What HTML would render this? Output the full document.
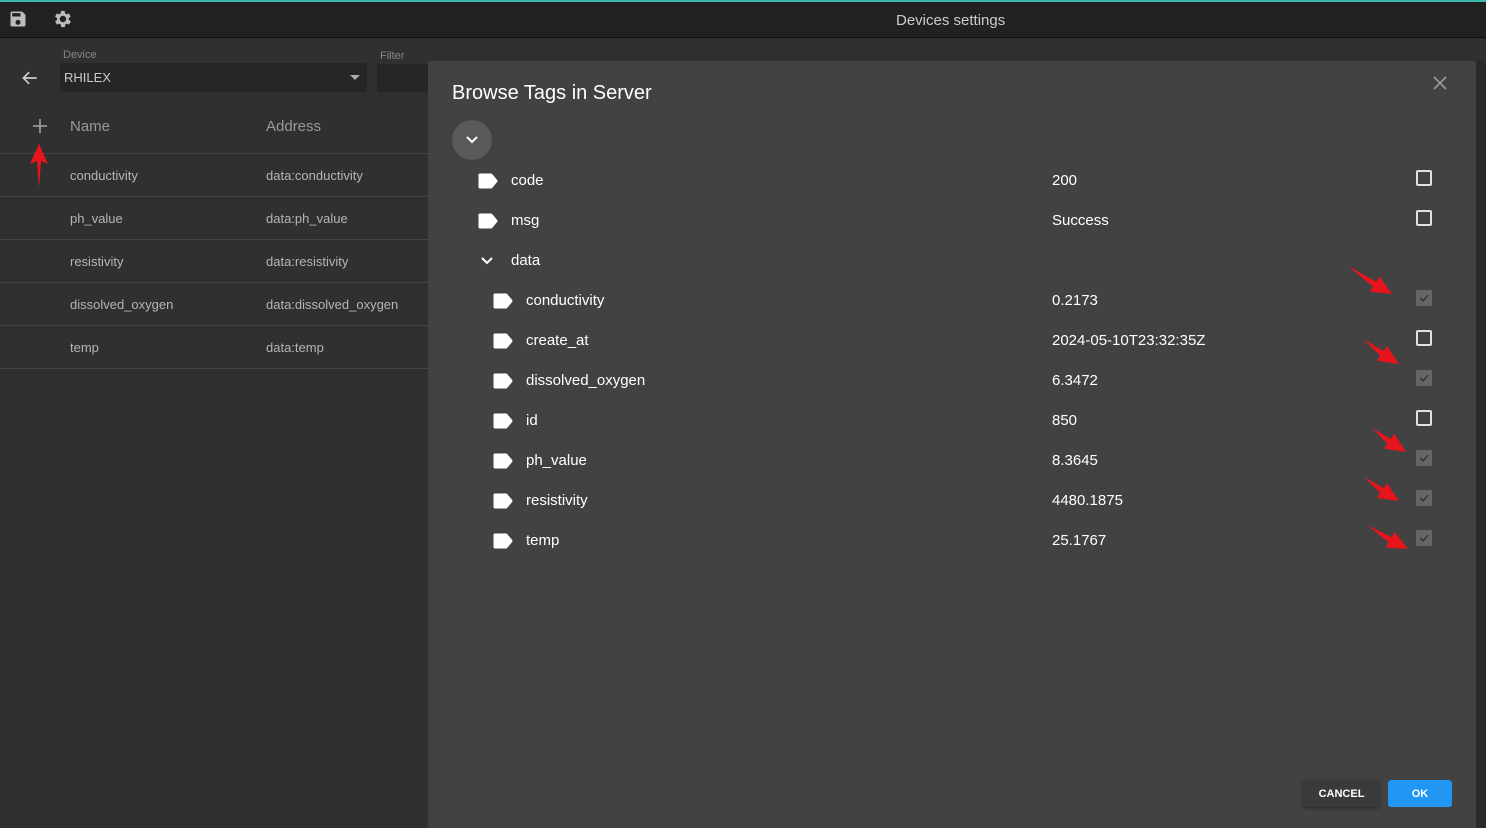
<!DOCTYPE html><html><head><style>
body{margin:0;width:1486px;height:828px;background:#303030;font-family:"Liberation Sans",sans-serif;position:relative;overflow:hidden;color:#ddd}
.a{position:absolute}
.top{left:0;top:0;width:1486px;height:38px;background:#212121;border-top:2px solid #3fb8b0;box-sizing:border-box;border-bottom:1px solid #111}
.row{left:0;width:430px;height:42px;border-bottom:1px solid #444}
.t{font-size:13px;color:#b5b5b5}
.dlg{left:428px;top:61px;width:1048px;height:767px;background:#424242;border-radius:3px}
.it{font-size:15px;color:#fff}
.cb{width:12px;height:12px;border:2px solid #e0e0e0;border-radius:2px}
.cbc{width:16px;height:16px;background:#666;border-radius:1px}
</style></head><body>
<div class="a top"></div>
<svg class="a" style="left:8px;top:9px" width="20" height="20" viewBox="0 0 24 24"><path fill="#bbb" d="M17 3H5a2 2 0 0 0-2 2v14a2 2 0 0 0 2 2h14a2 2 0 0 0 2-2V7l-4-4zm-5 16a3 3 0 1 1 0-6 3 3 0 0 1 0 6zm3-10H5V5h10v4z"/></svg>
<svg class="a" style="left:51px;top:8px" width="22" height="22" viewBox="0 0 24 24"><path fill="#bbb" d="M19.4 13a7.5 7.5 0 0 0 0-2l2.1-1.6-2-3.5-2.5 1a7 7 0 0 0-1.7-1L15 3.2h-4l-.4 2.7a7 7 0 0 0-1.7 1l-2.5-1-2 3.5L6.6 11a7.5 7.5 0 0 0 0 2l-2.1 1.6 2 3.5 2.5-1a7 7 0 0 0 1.7 1l.4 2.7h4l.4-2.7a7 7 0 0 0 1.7-1l2.5 1 2-3.5zM13 15.5a3.5 3.5 0 1 1 0-7 3.5 3.5 0 0 1 0 7z"/></svg>
<div class="a" style="left:896px;top:12px;font-size:15px;color:#ccc">Devices settings</div>
<div class="a" style="left:63px;top:49px;font-size:11px;color:#888">Device</div>
<div class="a" style="left:60px;top:63px;width:307px;height:29px;background:#262626;border-radius:2px"></div>
<div class="a" style="left:64px;top:70px;font-size:13px;color:#ccc">RHILEX</div>
<div class="a" style="left:350px;top:75px;border:5px solid transparent;border-top-color:#aaa;border-bottom:0"></div>
<div class="a" style="left:380px;top:50px;font-size:11px;color:#888">Filter</div>
<div class="a" style="left:377px;top:64px;width:60px;height:28px;background:#262626"></div>
<svg class="a" style="left:20px;top:68px" width="20" height="20" viewBox="0 0 24 24"><path fill="none" stroke="#ccc" stroke-width="2" d="M20 12H5M11 5l-7 7 7 7"/></svg>
<svg class="a" style="left:32px;top:118px" width="16" height="16"><path stroke="#aaa" stroke-width="1.5" d="M8 1v14M1 8h14"/></svg>
<div class="a" style="left:70px;top:118px;font-size:15px;color:#999">Name</div>
<div class="a" style="left:266px;top:118px;font-size:15px;color:#999">Address</div>
<div class="a" style="left:0;top:153px;width:430px;border-top:1px solid #444"></div>
<div class="a row" style="top:154px"><span class="a t" style="left:70px;top:14px">conductivity</span><span class="a t" style="left:266px;top:14px">data:conductivity</span></div>
<div class="a row" style="top:197px"><span class="a t" style="left:70px;top:14px">ph_value</span><span class="a t" style="left:266px;top:14px">data:ph_value</span></div>
<div class="a row" style="top:240px"><span class="a t" style="left:70px;top:14px">resistivity</span><span class="a t" style="left:266px;top:14px">data:resistivity</span></div>
<div class="a row" style="top:283px"><span class="a t" style="left:70px;top:14px">dissolved_oxygen</span><span class="a t" style="left:266px;top:14px">data:dissolved_oxygen</span></div>
<div class="a row" style="top:326px"><span class="a t" style="left:70px;top:14px">temp</span><span class="a t" style="left:266px;top:14px">data:temp</span></div>
<svg class="a" style="left:28px;top:142px" width="22" height="48"><polygon fill="#e8141c" points="11,2 20,22 13,19 11,46 9,19 2,22"/></svg>
<div class="a dlg"></div>
<div class="a" style="left:452px;top:82px;font-size:20px;color:#fff">Browse Tags in Server</div>
<svg class="a" style="left:1432px;top:75px" width="16" height="16"><path stroke="#999" stroke-width="1.6" d="M2 2L14 14M14 2L2 14"/></svg>
<div class="a" style="left:452px;top:120px;width:40px;height:40px;border-radius:50%;background:#5a5a5a"></div>
<svg class="a" style="left:465px;top:134px" width="14" height="12"><path fill="none" stroke="#fff" stroke-width="2" d="M2 3l5 5 5-5"/></svg>
<svg class="a" style="left:480px;top:255px" width="14" height="12"><path fill="none" stroke="#fff" stroke-width="2" d="M2 3l5 5 5-5"/></svg>
<div id="tree"></div>
<script>
var rows=[[477,'code','200',0],[477,'msg','Success',0],[0,'data','',-1],[492,'conductivity','0.2173',1],[492,'create_at','2024-05-10T23:32:35Z',0],[492,'dissolved_oxygen','6.3472',1],[492,'id','850',0],[492,'ph_value','8.3645',1],[492,'resistivity','4480.1875',1],[492,'temp','25.1767',1]];
var h='';rows.forEach(function(r,i){var y=180+i*40;
if(r[0])h+='<svg class="a" style="left:'+r[0]+'px;top:'+(y-7)+'px" width="22" height="16"><path fill="#fff" d="M3 2h11l5 6-5 6H3z" stroke="#fff" stroke-linejoin="round" stroke-width="3"/></svg>';
var tx=r[0]==477||r[0]==0?511:526;
h+='<div class="a it" style="left:'+tx+'px;top:'+(y-8)+'px">'+r[1]+'</div>';
if(r[2])h+='<div class="a it" style="left:1052px;top:'+(y-8)+'px">'+r[2]+'</div>';
if(r[3]==0)h+='<div class="a cb" style="left:1416px;top:'+(y-10)+'px"></div>';
if(r[3]==1)h+='<div class="a cbc" style="left:1416px;top:'+(y-10)+'px"><svg width="16" height="16"><path fill="none" stroke="#333" stroke-width="1.5" d="M4 8l3 3 5-6"/></svg></div>';
});
[[1348,266,1392,294],[1363,339,1399,364],[1372,428,1406,452],[1364,477,1399,501],[1367,525,1408,549]].forEach(function(a){
var dx=a[2]-a[0],dy=a[3]-a[1],L=Math.hypot(dx,dy),ux=dx/L,uy=dy/L,px=-uy,py=ux,bx=a[2]-ux*20,by=a[3]-uy*20;
h+='<svg class="a" style="left:0;top:0" width="1486" height="828"><polygon fill="#e8141c" points="'+a[0]+','+a[1]+' '+(bx+px*4)+','+(by+py*4)+' '+(bx+px*10)+','+(by+py*10)+' '+a[2]+','+a[3]+' '+(bx-px*8)+','+(by-py*8)+' '+(bx-px*2)+','+(by-py*2)+'"/></svg>';});
document.getElementById('tree').innerHTML=h;
</script>
<div class="a" style="left:1303px;top:780px;width:77px;height:27px;background:#3a3a3a;border-radius:3px;box-shadow:0 1px 3px rgba(0,0,0,.4);font-size:11px;font-weight:bold;color:#fff;text-align:center;line-height:28px">CANCEL</div>
<div class="a" style="left:1388px;top:780px;width:64px;height:27px;background:#2196f3;border-radius:3px;font-size:11px;font-weight:bold;color:#fff;text-align:center;line-height:28px">OK</div>
<div class="a" style="left:1476px;top:61px;width:10px;height:767px;background:#2a2a2a"></div>
</body></html>
